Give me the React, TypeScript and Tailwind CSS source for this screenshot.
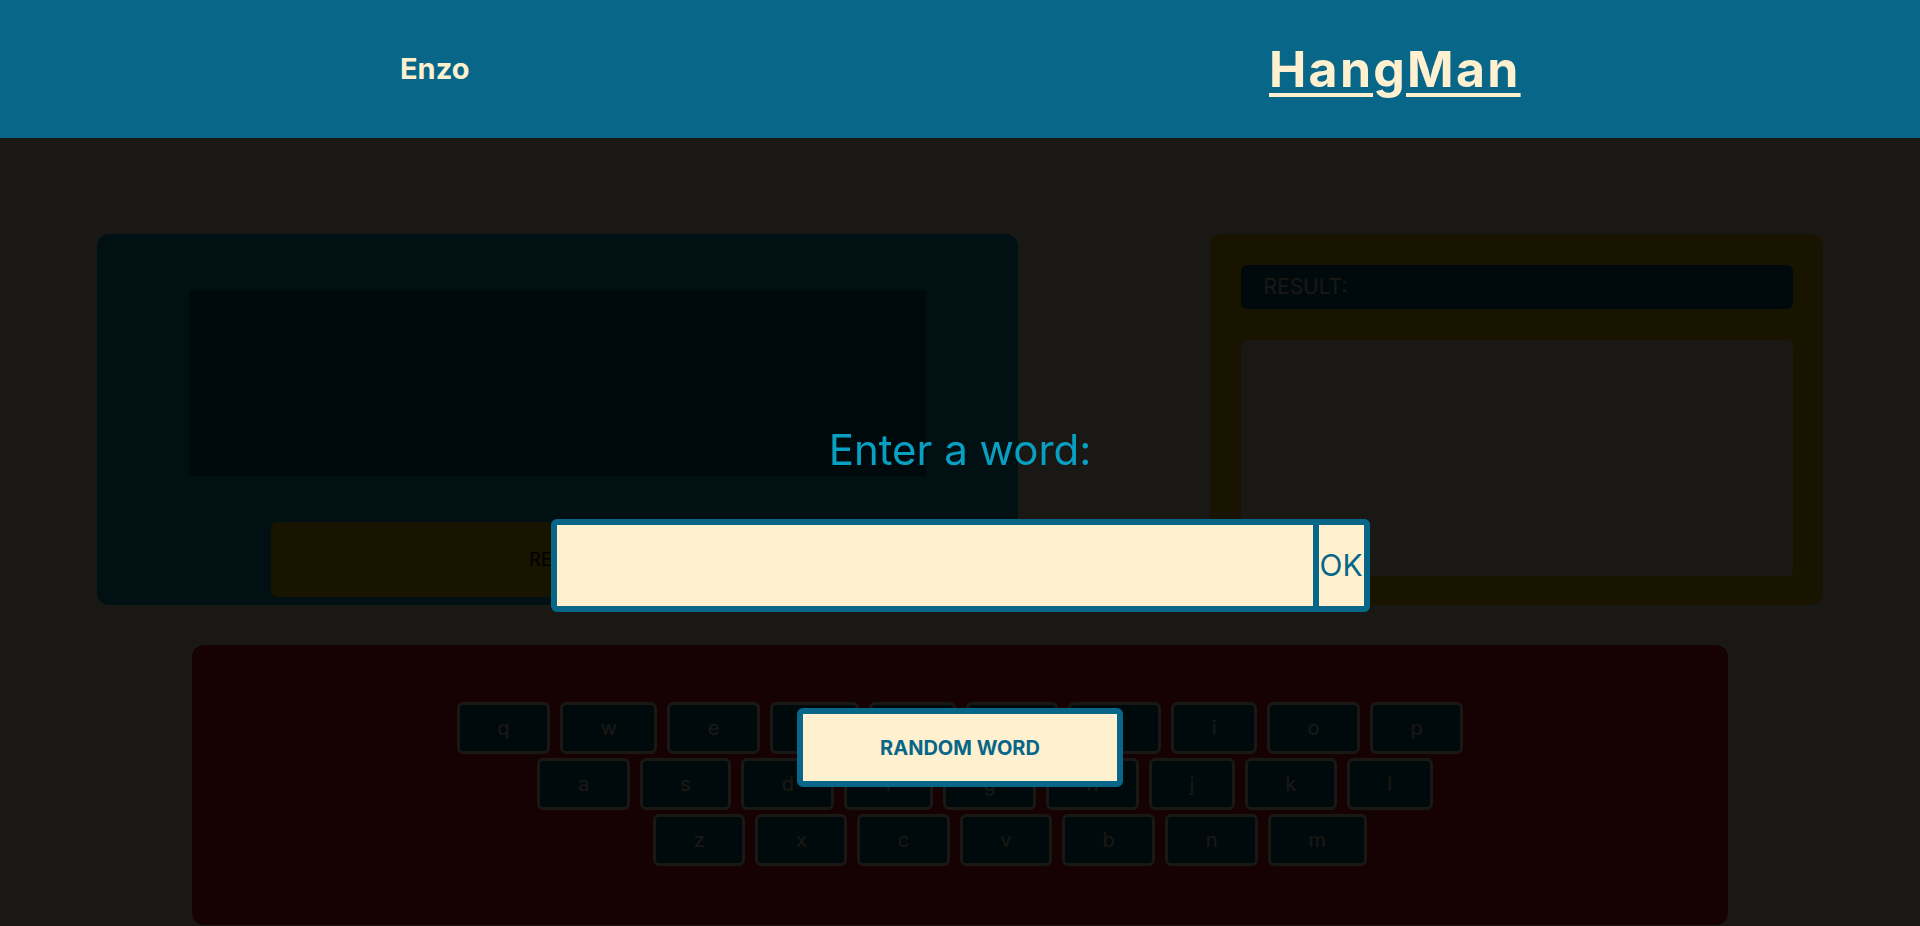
import { useState } from 'react'

const rows: { keys: string[]; pad: string }[] = [
  { keys: ['q', 'w', 'e', 'r', 't', 'y', 'u', 'i', 'o', 'p'], pad: 'pl-0' },
  { keys: ['a', 's', 'd', 'f', 'g', 'h', 'j', 'k', 'l'], pad: 'pl-[50px]' },
  { keys: ['z', 'x', 'c', 'v', 'b', 'n', 'm'], pad: 'pl-[100px]' },
]

function Key({ letter }: { letter: string }) {
  return (
    <button className="h-[52px] rounded-md border-[3px] border-[#fff1d0] bg-[#086788] px-[37.5px] text-[20px] text-[#fff1d0]">
      {letter}
    </button>
  )
}

export default function App() {
  const [word, setWord] = useState('')

  return (
    <div className="min-h-[926px] bg-[#fff1d0] font-['Inter',sans-serif]">
      <header className="relative z-20 flex h-[138px] items-center bg-[#086788] text-[#fff1d0]">
        <div className="w-[960px] pl-[400px] text-[29px] font-bold">Enzo</div>
        <h1 className="pl-[309px] text-[50px] font-bold tracking-[0.045em] underline decoration-[4px] underline-offset-[6px]">
          HangMan
        </h1>
      </header>

      <main className="pt-[96px]">
        <div className="flex justify-between px-[97px]">
          <section className="flex h-[371px] w-[921px] flex-col items-center rounded-xl bg-[#07a0c3] pt-[56px]">
            <div className="h-[186px] w-[737px] bg-[#086788]" />
            <button className="mt-[46px] h-[75px] w-[574px] rounded-md bg-[#f0c808] text-[18px] text-black">
              RESET
            </button>
          </section>

          <section className="flex h-[371px] w-[613px] flex-col items-center gap-[31px] rounded-xl bg-[#f0c808] pt-[31px]">
            <div className="flex h-[44px] w-[552px] items-center rounded-md bg-[#086788] px-[23px] text-[21px] text-[#fff1d0]">
              RESULT:
            </div>
            <div className="h-[236px] w-[552px] rounded-md bg-[#fff1d0]" />
          </section>
        </div>

        <section className="mx-auto mt-[40px] flex h-[280px] w-[1536px] flex-col gap-[4px] rounded-xl bg-[#dd1c1a] pt-[57px]">
          {rows.map((row, i) => (
            <div key={i} className={`flex justify-center gap-[10px] ${row.pad}`}>
              {row.keys.map((k) => (
                <Key key={k} letter={k} />
              ))}
            </div>
          ))}
        </section>
      </main>

      <div className="fixed inset-x-0 top-[138px] bottom-0 z-10 flex flex-col items-center bg-black/90 pt-[287px]">
        <p className="text-[42px] leading-[50px] text-[#07a0c3]">Enter a word:</p>
        <form
          onSubmit={(e) => e.preventDefault()}
          className="mt-[44px] flex h-[93px] w-[819px]"
        >
          <input
            value={word}
            onChange={(e) => setWord(e.target.value)}
            className="h-full flex-1 rounded-l-md border-[6px] border-[#086788] bg-[#fff1d0] px-3 text-[28px] text-[#086788] outline-none"
          />
          <button
            type="submit"
            className="h-full w-[51px] rounded-r-md border-[6px] border-l-0 border-[#086788] bg-[#fff1d0] text-[30px] text-[#086788]"
          >
            OK
          </button>
        </form>
        <button className="mt-[96px] h-[79px] w-[326px] rounded-md border-[6px] border-[#086788] bg-[#fff1d0] text-[20px] font-bold text-[#086788]">
          RANDOM WORD
        </button>
      </div>
    </div>
  )
}
